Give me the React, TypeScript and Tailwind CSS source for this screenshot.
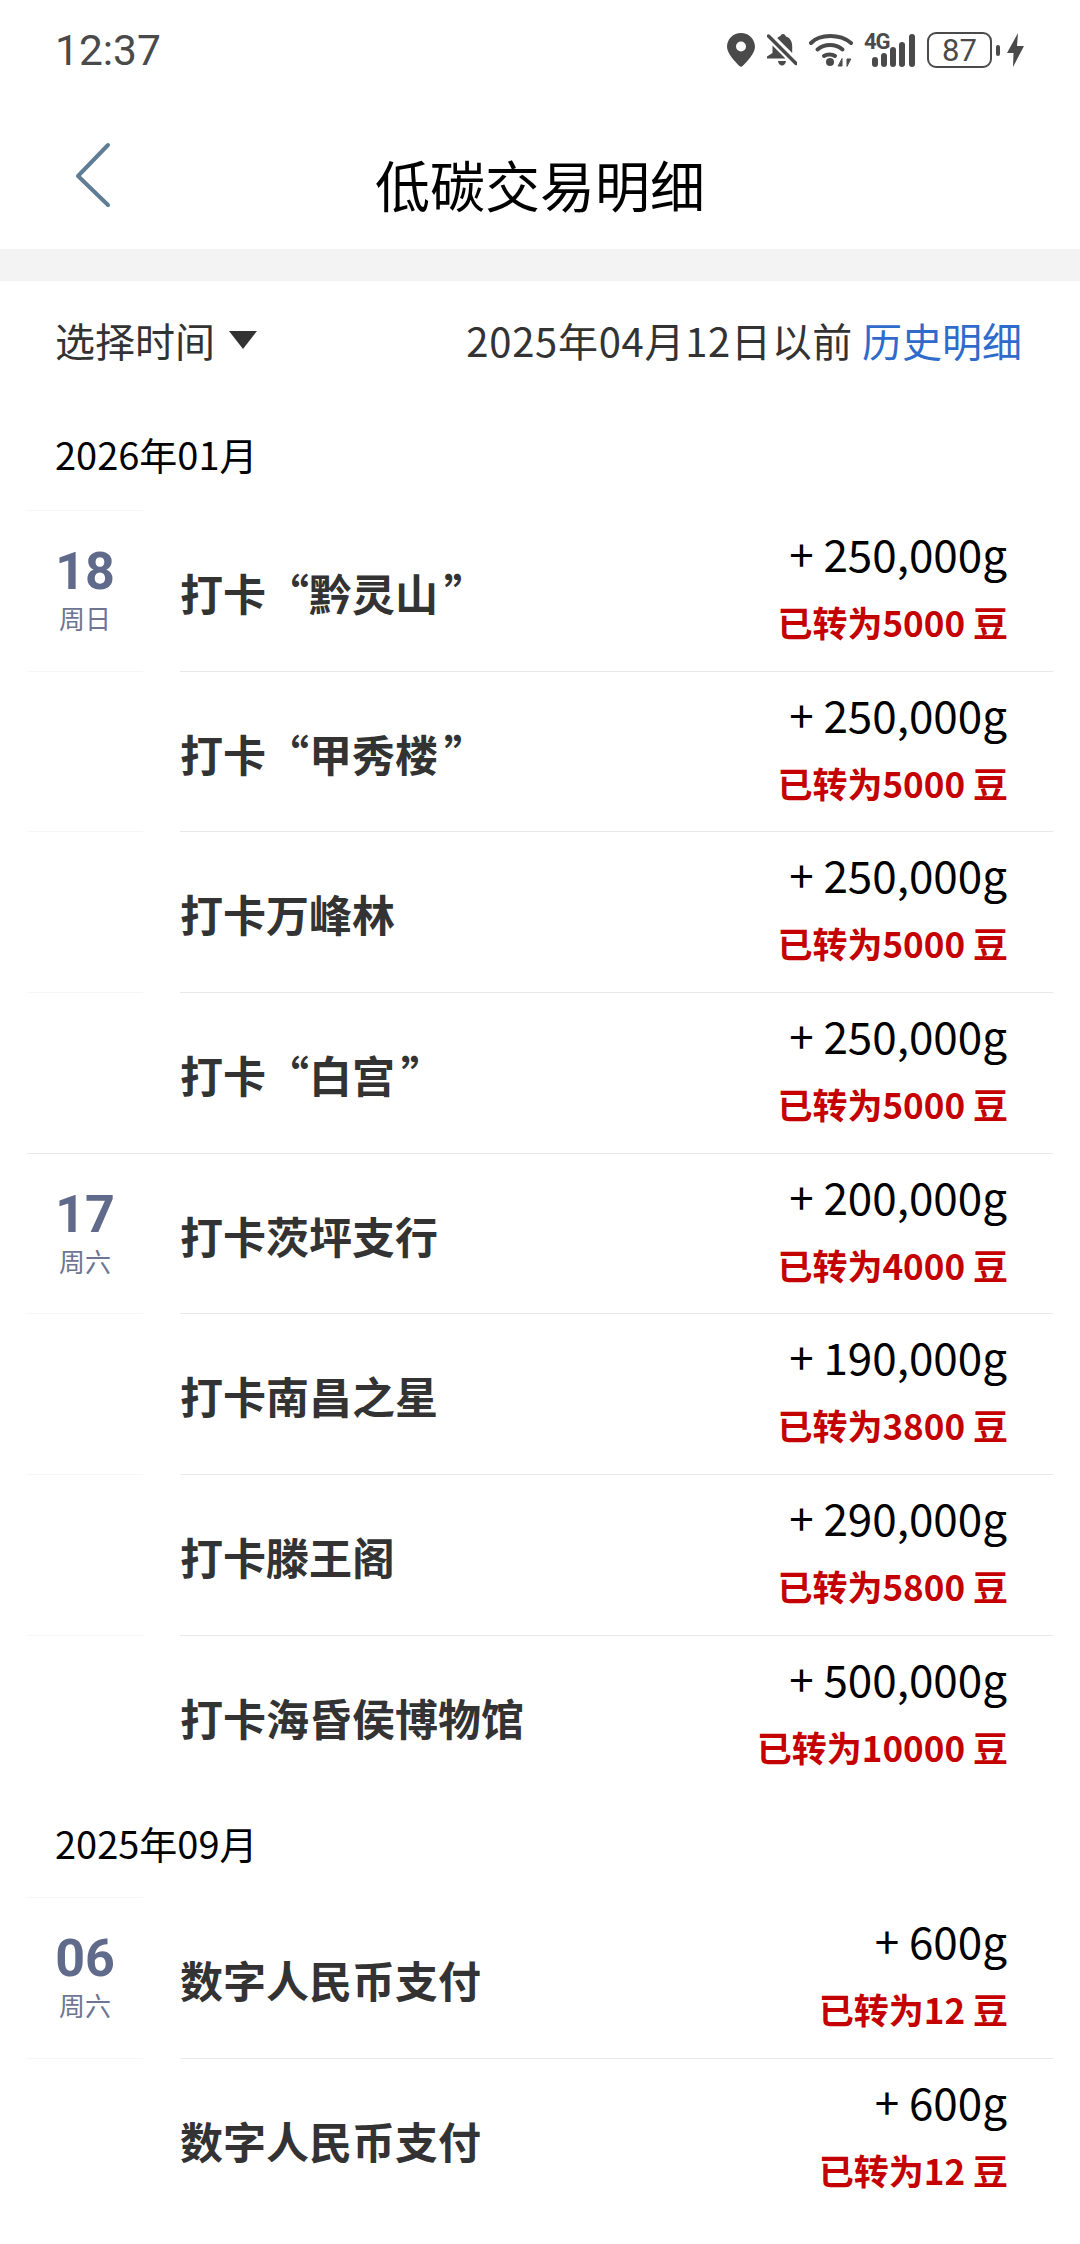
const FONT = '"Noto Sans CJK SC", sans-serif';

type Item = { day?: string; week?: string; title: string; amount: string; bean: string; groupEnd?: boolean; last?: boolean };

const january: Item[] = [
  { day: '18', week: '周日', title: '打卡“黔灵山', amount: '+ 250,000g', bean: '已转为5000 豆' },
  { title: '打卡“甲秀楼', amount: '+ 250,000g', bean: '已转为5000 豆' },
  { title: '打卡万峰林', amount: '+ 250,000g', bean: '已转为5000 豆' },
  { title: '打卡“白宫', amount: '+ 250,000g', bean: '已转为5000 豆', groupEnd: true },
  { day: '17', week: '周六', title: '打卡茨坪支行', amount: '+ 200,000g', bean: '已转为4000 豆' },
  { title: '打卡南昌之星', amount: '+ 190,000g', bean: '已转为3800 豆' },
  { title: '打卡滕王阁', amount: '+ 290,000g', bean: '已转为5800 豆' },
  { title: '打卡海昏侯博物馆', amount: '+ 500,000g', bean: '已转为10000 豆', last: true },
];

const september: Item[] = [
  { day: '06', week: '周六', title: '数字人民币支付', amount: '+ 600g', bean: '已转为12 豆' },
  { title: '数字人民币支付', amount: '+ 600g', bean: '已转为12 豆', last: true },
];

const StatusIcons = () => (
  <div className="flex items-center text-[#4a4a4a]">
    <svg width="28" height="34" viewBox="0 0 28 34" fill="currentColor">
      <path fillRule="evenodd" d="M14 0C6.300 0 0 6.200 0 13.800 0 21 9 29.500 12.400 33c.9.9 2.300.9 3.200 0C19 29.500 28 21 28 13.800 28 6.200 21.700 0 14 0zm0 18.500a5 5 0 1 1 0-10 5 5 0 0 1 0 10z" />
    </svg>
    <svg className="ml-[12px]" width="30" height="34" viewBox="0 0 30 34" fill="currentColor">
      <path d="M16 1c1.500 0 2.600 1 2.800 2.400 4.200 1.200 6.400 4.800 6.400 9.600v7l-15-15c1-1 2.200-1.600 3.200-2C13.600 2 14.500 1 16 1z" />
      <path d="M5.500 12.500 18.500 25.500H0v-2l5.500-3.500z" />
      <path d="M11 28h8c-.4 2.800-2 4.500-4 4.500s-3.600-1.700-4-4.500z" />
      <path d="M1.500 3 29 30.500" stroke="currentColor" strokeWidth="3.500" strokeLinecap="round" />
    </svg>
    <svg className="ml-[12px]" width="44" height="34" viewBox="0 0 44 34" fill="none" stroke="currentColor" strokeLinecap="round">
      <path d="M2 10C11 .8 31 .8 42 10" strokeWidth="4" />
      <path d="M8.500 16.500c7-6 18-6 25 0" strokeWidth="4" />
      <path d="M15 23c3-2 8-2 11 0" strokeWidth="4" />
      <circle cx="21" cy="29" r="4" fill="currentColor" stroke="none" />
      <path d="M33 26v7h-3.500z" fill="currentColor" strokeWidth="1" />
      <path d="M38 33v-7h3.500z" fill="currentColor" strokeWidth="1" />
    </svg>
    <div className="relative ml-[12px] h-[34px] w-[50px]">
      <span className="absolute left-[-1px] top-[-2px] text-[22px] font-bold leading-[22px] tracking-[-1px]" style={{ fontFamily: '"Roboto", sans-serif' }}>4G</span>
      <svg className="absolute inset-0" width="50" height="34" viewBox="0 0 50 34" fill="currentColor">
        <rect x="7" y="24" width="6" height="10" rx="3" />
        <rect x="16" y="20" width="6" height="14" rx="3" />
        <rect x="25" y="14" width="6" height="20" rx="3" />
        <rect x="34" y="9" width="6" height="25" rx="3" />
        <rect x="44" y="1" width="6" height="33" rx="3" />
      </svg>
    </div>
    <div className="ml-[12px] flex h-[36px] w-[65px] items-center justify-center rounded-[9px] border-[2.500px] border-[#4a4a4a] text-[31px] leading-none" style={{ fontFamily: '"Roboto", sans-serif' }}>87</div>
    <div className="ml-[4px] h-[11px] w-[4px] rounded-[2px] bg-[#4a4a4a]" />
    <svg className="ml-[7px]" width="17" height="34" viewBox="0 0 17 34" fill="currentColor">
      <path d="M11 0 0 20h6.500L6 34 17 13h-7z" />
    </svg>
  </div>
);

const Row = ({ item }: { item: Item }) => {
  const leftLine = item.last || item.groupEnd ? '' : 'border-b border-[#f6f6f6]';
  const rightLine = item.last || item.groupEnd ? '' : 'border-b border-[#e9e9e9]';
  return (
    <div className={item.groupEnd ? 'mx-[27px] flex h-[160.700px] border-b border-[#e9e9e9]' : 'mx-[27px] flex h-[160.700px]'}>
      <div className={`flex w-[116px] shrink-0 flex-col items-center pt-[31px] ${leftLine}`}>
        {item.day && (
          <>
            <div className="text-[52px] font-bold leading-[60px] text-[#606a8a]" style={{ fontFamily: '"Roboto", sans-serif' }}>{item.day}</div>
            <div className="text-[26px] leading-[32px] text-[#6d7592]">{item.week}</div>
          </>
        )}
      </div>
      <div className={`ml-[37px] flex flex-1 items-center justify-between pr-[45px] ${rightLine}`}>
        <div className="mt-[2px] text-[43px] font-bold leading-[56px] text-[#333333]">
          {item.title}
          {item.title.includes('“') && <span className="ml-[6px]">”</span>}
        </div>
        <div className="flex flex-col items-end self-start pt-[14px]">
          <div className="mr-[1px] text-[44px] leading-[56px] text-black">{item.amount}</div>
          <div className="mt-[18px] text-[35px] font-bold leading-[46px] text-[#c40000]">{item.bean}</div>
        </div>
      </div>
    </div>
  );
};

export default function App() {
  return (
    <div className="h-[2244px] w-[1080px] overflow-hidden bg-white" style={{ fontFamily: FONT }}>
      <div className="flex h-[100px] items-center justify-between pl-[55px] pr-[56px]">
        <span className="mt-[2px] text-[42.500px] leading-none text-[#4a4a4a]" style={{ fontFamily: '"Roboto", sans-serif' }}>12:37</span>
        <StatusIcons />
      </div>
      <div className="relative flex h-[149px] items-center justify-center">
        <svg className="absolute left-[72px] top-[42px]" width="44" height="66" viewBox="0 0 44 66" fill="none" stroke="#5f7d94" strokeWidth="4" strokeLinecap="round" strokeLinejoin="round">
          <path d="M36 3 6 34l30 29" />
        </svg>
        <h1 className="mt-[17px] text-[55px] font-normal leading-[60px] text-black">低碳交易明细</h1>
      </div>
      <div className="h-[32px] bg-[#f3f3f3]" />
      <div className="flex h-[116px] items-center justify-between pl-[55px] pr-[58px] pt-[2px]">
        <div className="flex items-center text-[40px] leading-[56px] text-[#333333]">
          选择时间
          <span className="ml-[14px] h-0 w-0 border-x-[14px] border-t-[18px] border-x-transparent border-t-[#333333]" />
        </div>
        <div className="text-[40px] leading-[56px] text-[#333333]">
          <span className="tracking-[0.7px]">2025年04月12日以前</span> <span className="text-[#2f6bcb]">历史明细</span>
        </div>
      </div>
      <div className="flex h-[113px] items-center pl-[55px] text-[38px] leading-[50px] text-black">2026年01月</div>
      <div className="mx-[27px] w-[116px] border-t border-[#f6f6f6]" />
      {january.map((item, i) => <Row key={i} item={item} />)}
      <div className="flex h-[100.500px] items-center pb-[8px] pl-[55px] text-[38px] leading-[50px] text-black">2025年09月</div>
      <div className="mx-[27px] w-[116px] border-t border-[#f6f6f6]" />
      {september.map((item, i) => <Row key={i} item={item} />)}
    </div>
  );
}
